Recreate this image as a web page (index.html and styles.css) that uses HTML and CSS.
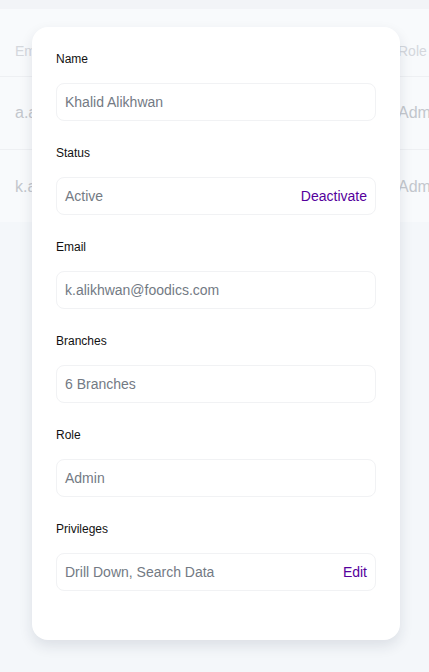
FILE: index.html
```html
<!DOCTYPE html>
<html>
<head>
<meta charset="utf-8">
<link rel="stylesheet" href="styles.css">
</head>
<body>
<div class="page">
  <div class="topstrip"></div>
  <div class="table">
    <div class="row head"><span class="c1">Email</span><span class="c2">Role</span></div>
    <div class="row"><span class="c1">a.alikhwan@foodics.com</span><span class="c2">Admin</span></div>
    <div class="row"><span class="c1">k.alikhwan@foodics.com</span><span class="c2">Admin</span></div>
  </div>

  <div class="card">
    <div class="group">
      <div class="label">Name</div>
      <div class="field"><span>Khalid Alikhwan</span></div>
    </div>
    <div class="group">
      <div class="label">Status</div>
      <div class="field"><span>Active</span><a class="action">Deactivate</a></div>
    </div>
    <div class="group">
      <div class="label">Email</div>
      <div class="field"><span>k.alikhwan@foodics.com</span></div>
    </div>
    <div class="group">
      <div class="label">Branches</div>
      <div class="field"><span>6 Branches</span></div>
    </div>
    <div class="group">
      <div class="label">Role</div>
      <div class="field"><span>Admin</span></div>
    </div>
    <div class="group">
      <div class="label">Privileges</div>
      <div class="field"><span>Drill Down, Search Data</span><a class="action">Edit</a></div>
    </div>
  </div>
</div>
</body>
</html>
```

FILE: styles.css
```css
* { box-sizing: border-box; }
html, body {
  margin: 0;
  padding: 0;
  background: #f4f7fa;
  font-family: "Liberation Sans", Arial, sans-serif;
}
.page {
  position: relative;
  width: 429px;
  height: 672px;
  overflow: hidden;
}
.topstrip {
  height: 9px;
  background: #f2f4f7;
}
.table {
  background: #f8fafc;
  height: 213px;
}
.row {
  display: flex;
  justify-content: space-between;
  align-items: center;
  height: 73px;
  padding-left: 15px;
  border-bottom: 1px solid #eef0f3;
  font-size: 16px;
  color: #c3c7cd;
  white-space: nowrap;
}
.row.head {
  height: 68px;
  padding-top: 16px;
  font-size: 14px;
  color: #d4d7dc;
}
.row:last-child { border-bottom: none; }
.c1 {
  width: 40px;
  overflow: hidden;
}
.c2 {
  width: 31px;
  overflow: hidden;
}
.card {
  position: absolute;
  left: 32px;
  top: 27px;
  width: 368px;
  background: #ffffff;
  border-radius: 16px;
  padding: 24px 24px 1px;
  box-shadow: 0 6px 14px rgba(30, 40, 60, 0.11);
}
.group {
  margin-bottom: 24px;
}
.label {
  font-size: 12px;
  line-height: 16px;
  color: #111111;
  margin-bottom: 16px;
}
.field {
  height: 38px;
  border: 1px solid #f1f2f4;
  border-radius: 8px;
  padding: 0 8px;
  display: flex;
  align-items: center;
  justify-content: space-between;
  font-size: 14px;
  color: #737a84;
}
.action {
  color: #55009c;
}
.group:last-child { margin-bottom: 48px; }
```
